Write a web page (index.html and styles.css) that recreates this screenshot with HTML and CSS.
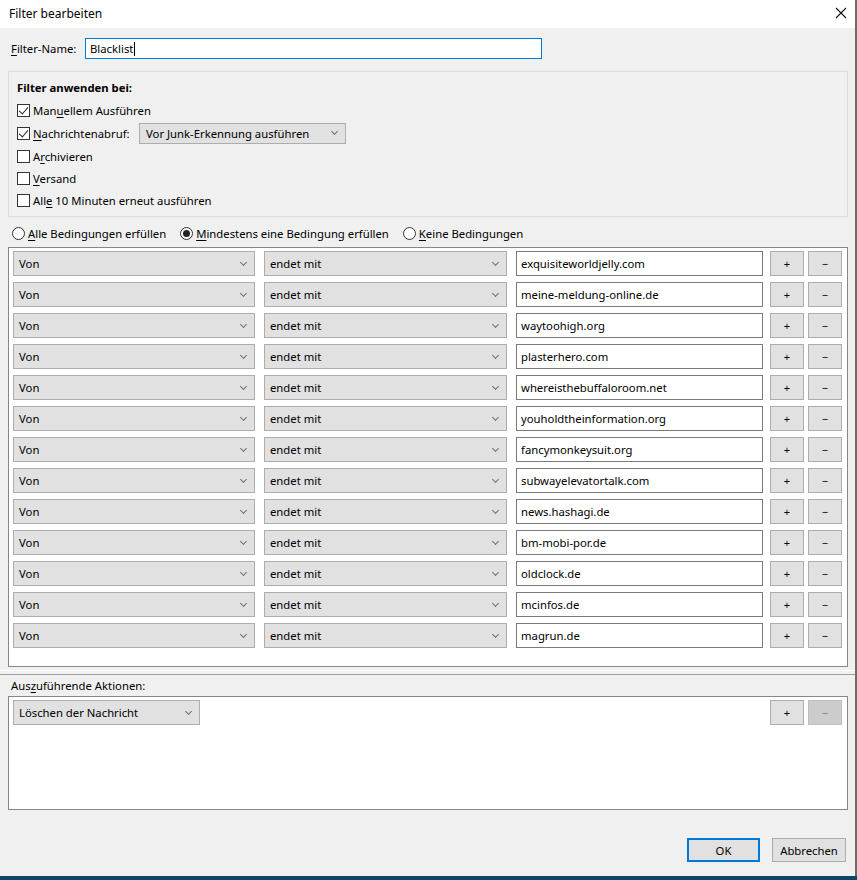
FILE: index.html
```html
<!DOCTYPE html>
<html lang="de">
<head>
    <meta charset="UTF-8">
    <title>Filter bearbeiten</title>
    <link rel="stylesheet" href="styles.css">
</head>
<body>

    <div class="window">
        <div class="titlebar">
            <span class="title">Filter bearbeiten</span>
            <svg class="close" width="12" height="12" viewBox="0 0 12 12">
                <path d="M1 1 L11 11 M11 1 L1 11" stroke="#111" stroke-width="1.1" fill="none"/>
            </svg>
        </div>

        <div class="dialog">
            <div class="name-row">
                <span class="label"><u>F</u>ilter-Name:</span>
                <div class="text-field name-field">Blacklist<span class="caret"></span></div>
            </div>

            <div class="apply-group">
                <div class="group-title">Filter anwenden bei:</div>
                <div class="check-row">
                    <span class="checkbox checked"></span>
                    <span>Man<u>u</u>ellem Ausführen</span>
                </div>
                <div class="check-row tall">
                    <span class="checkbox checked"></span>
                    <span class="check-label"><u>N</u>achrichtenabruf:</span>
                    <div class="dropdown junk-select">Vor Junk-Erkennung ausführen</div>
                </div>
                <div class="check-row">
                    <span class="checkbox"></span>
                    <span>A<u>r</u>chivieren</span>
                </div>
                <div class="check-row">
                    <span class="checkbox"></span>
                    <span><u>V</u>ersand</span>
                </div>
                <div class="check-row">
                    <span class="checkbox"></span>
                    <span>All<u>e</u> 10 Minuten erneut ausführen</span>
                </div>
            </div>

            <div class="match-row">
                <span class="radio-item"><span class="radio"></span><span><u>A</u>lle Bedingungen erfüllen</span></span>
                <span class="radio-item"><span class="radio selected"></span><span><u>M</u>indestens eine Bedingung erfüllen</span></span>
                <span class="radio-item"><span class="radio"></span><span><u>K</u>eine Bedingungen</span></span>
            </div>

            <div class="rule-list">
                <div class="rule"><div class="dropdown field-select">Von</div><div class="dropdown op-select">endet mit</div><div class="text-field value">exquisiteworldjelly.com</div><span class="small-btn">+</span><span class="small-btn">−</span></div>
                <div class="rule"><div class="dropdown field-select">Von</div><div class="dropdown op-select">endet mit</div><div class="text-field value">meine-meldung-online.de</div><span class="small-btn">+</span><span class="small-btn">−</span></div>
                <div class="rule"><div class="dropdown field-select">Von</div><div class="dropdown op-select">endet mit</div><div class="text-field value">waytoohigh.org</div><span class="small-btn">+</span><span class="small-btn">−</span></div>
                <div class="rule"><div class="dropdown field-select">Von</div><div class="dropdown op-select">endet mit</div><div class="text-field value">plasterhero.com</div><span class="small-btn">+</span><span class="small-btn">−</span></div>
                <div class="rule"><div class="dropdown field-select">Von</div><div class="dropdown op-select">endet mit</div><div class="text-field value">whereisthebuffaloroom.net</div><span class="small-btn">+</span><span class="small-btn">−</span></div>
                <div class="rule"><div class="dropdown field-select">Von</div><div class="dropdown op-select">endet mit</div><div class="text-field value">youholdtheinformation.org</div><span class="small-btn">+</span><span class="small-btn">−</span></div>
                <div class="rule"><div class="dropdown field-select">Von</div><div class="dropdown op-select">endet mit</div><div class="text-field value">fancymonkeysuit.org</div><span class="small-btn">+</span><span class="small-btn">−</span></div>
                <div class="rule"><div class="dropdown field-select">Von</div><div class="dropdown op-select">endet mit</div><div class="text-field value">subwayelevatortalk.com</div><span class="small-btn">+</span><span class="small-btn">−</span></div>
                <div class="rule"><div class="dropdown field-select">Von</div><div class="dropdown op-select">endet mit</div><div class="text-field value">news.hashagi.de</div><span class="small-btn">+</span><span class="small-btn">−</span></div>
                <div class="rule"><div class="dropdown field-select">Von</div><div class="dropdown op-select">endet mit</div><div class="text-field value">bm-mobi-por.de</div><span class="small-btn">+</span><span class="small-btn">−</span></div>
                <div class="rule"><div class="dropdown field-select">Von</div><div class="dropdown op-select">endet mit</div><div class="text-field value">oldclock.de</div><span class="small-btn">+</span><span class="small-btn">−</span></div>
                <div class="rule"><div class="dropdown field-select">Von</div><div class="dropdown op-select">endet mit</div><div class="text-field value">mcinfos.de</div><span class="small-btn">+</span><span class="small-btn">−</span></div>
                <div class="rule"><div class="dropdown field-select">Von</div><div class="dropdown op-select">endet mit</div><div class="text-field value">magrun.de</div><span class="small-btn">+</span><span class="small-btn">−</span></div>
            </div>
        </div>

        <div class="splitter"></div>

        <div class="dialog lower">
            <div class="actions-label">Aus<u>z</u>uführende Aktionen:</div>
            <div class="action-list">
                <div class="rule">
                    <div class="dropdown action-select">Löschen der Nachricht</div>
                    <span class="spacer"></span>
                    <span class="small-btn">+</span>
                    <span class="small-btn disabled">−</span>
                </div>
            </div>

            <div class="dialog-buttons">
                <span class="push-btn default">OK</span>
                <span class="push-btn">Abbrechen</span>
            </div>
        </div>
    </div>

    <div class="taskbar"></div>

</body>
</html>
```

FILE: styles.css
```css
body {
    margin: 0;
    padding: 0;
    width: 857px;
    height: 880px;
    overflow: hidden;
    background-color: #6b6b6b;
    font-family: "Noto Sans", "Open Sans", sans-serif;
    font-size: 11.3px;
    color: #000000;
}
u {
    text-decoration-thickness: 1px;
    text-underline-offset: 2px;
}
.window {
    width: 855px;
    height: 876px;
    background-color: #f0f0f0;
    display: flex;
    flex-direction: column;
}
.titlebar {
    box-sizing: border-box;
    height: 28px;
    background-color: #ffffff;
    display: flex;
    align-items: center;
    justify-content: space-between;
    padding: 0 8px 2px 9px;
    font-size: 12px;
}
.dialog {
    padding: 10px 7px 0 8px;
    display: flex;
    flex-direction: column;
}
.name-row {
    display: flex;
    align-items: center;
    height: 21px;
}
.name-row .label {
    width: 74px;
    padding-left: 3px;
}
.text-field {
    box-sizing: border-box;
    background-color: #ffffff;
    border: 1px solid #7a7a7a;
    display: flex;
    align-items: center;
    padding-left: 4px;
}
.name-field {
    width: 457px;
    height: 21px;
    border-color: #0078d7;
}
.caret {
    display: inline-block;
    width: 1px;
    height: 14px;
    background-color: #000;
    margin-left: 1px;
}
.apply-group {
    margin-top: 12px;
    border: 1px solid #dcdcdc;
    padding: 8px 0 5px 8px;
}
.group-title {
    font-weight: bold;
    line-height: 16px;
    margin-bottom: 3px;
}
.check-row {
    display: flex;
    align-items: center;
    height: 22px;
}
.check-row.tall {
    height: 24px;
}
.checkbox {
    box-sizing: border-box;
    width: 13px;
    height: 13px;
    border: 1px solid #333333;
    background-color: #ffffff;
    margin-right: 3px;
    position: relative;
}
.checkbox.checked::after {
    content: "";
    position: absolute;
    left: 3px;
    top: 0px;
    width: 4px;
    height: 8px;
    border-right: 1px solid #222;
    border-bottom: 1px solid #222;
    transform: rotate(40deg);
}
.check-label {
    width: 106px;
}
.dropdown {
    box-sizing: border-box;
    height: 25px;
    background-color: #e1e1e1;
    border: 1px solid #adadad;
    display: flex;
    align-items: center;
    padding-left: 5px;
    position: relative;
}
.dropdown::after {
    content: "";
    position: absolute;
    right: 8px;
    top: 50%;
    width: 4px;
    height: 4px;
    margin-top: -4px;
    border-right: 1px solid #707070;
    border-bottom: 1px solid #707070;
    transform: rotate(45deg);
}
.junk-select {
    width: 207px;
    height: 21px;
    padding-left: 6px;
}
.match-row {
    margin-top: 8px;
    height: 16px;
    display: flex;
    align-items: center;
    gap: 14px;
    padding-left: 4px;
}
.radio-item {
    display: flex;
    align-items: center;
    gap: 3px;
}
.radio {
    box-sizing: border-box;
    width: 13px;
    height: 13px;
    border: 1px solid #333333;
    border-radius: 50%;
    background-color: #ffffff;
    display: flex;
    align-items: center;
    justify-content: center;
}
.radio.selected::after {
    content: "";
    width: 7px;
    height: 7px;
    border-radius: 50%;
    background-color: #222222;
}
.rule-list {
    margin-top: 6px;
    height: 420px;
    box-sizing: border-box;
    background-color: #ffffff;
    border: 1px solid #828790;
    padding: 3px 0 0 4px;
    display: flex;
    flex-direction: column;
    gap: 6px;
}
.rule {
    display: flex;
    align-items: center;
    height: 25px;
}
.field-select {
    width: 242px;
    margin-right: 9px;
}
.op-select {
    width: 243px;
    margin-right: 9px;
}
.value {
    width: 247px;
    height: 25px;
    margin-right: 7px;
}
.small-btn {
    box-sizing: border-box;
    width: 34px;
    height: 25px;
    background-color: #e1e1e1;
    border: 1px solid #adadad;
    display: flex;
    align-items: center;
    justify-content: center;
    margin-right: 4px;
    font-size: 11px;
}
.small-btn.disabled {
    background-color: #cccccc;
    border-color: #bfbfbf;
    color: #838383;
}
.splitter {
    margin-top: 3px;
    height: 3px;
    border-top: 1px solid #ffffff;
    border-bottom: 1px solid #a0a0a0;
}
.lower {
    padding-top: 3px;
    flex: 1;
}
.actions-label {
    line-height: 16px;
    padding-left: 3px;
}
.action-list {
    margin-top: 2px;
    height: 114px;
    box-sizing: border-box;
    background-color: #ffffff;
    border: 1px solid #828790;
    padding: 3px 0 0 4px;
}
.action-select {
    width: 187px;
}
.spacer {
    flex: 1;
}
.action-list .small-btn:last-child {
    margin-right: 5px;
}
.dialog-buttons {
    margin-top: auto;
    margin-bottom: 14px;
    display: flex;
    justify-content: flex-end;
    gap: 12px;
    padding-right: 2px;
}
.push-btn {
    box-sizing: border-box;
    width: 74px;
    height: 24px;
    background-color: #e1e1e1;
    border: 1px solid #adadad;
    display: flex;
    align-items: center;
    justify-content: center;
}
.push-btn.default {
    width: 73px;
    border: 2px solid #0078d7;
}
.taskbar {
    height: 4px;
    background-color: #0e4467;
}
```
